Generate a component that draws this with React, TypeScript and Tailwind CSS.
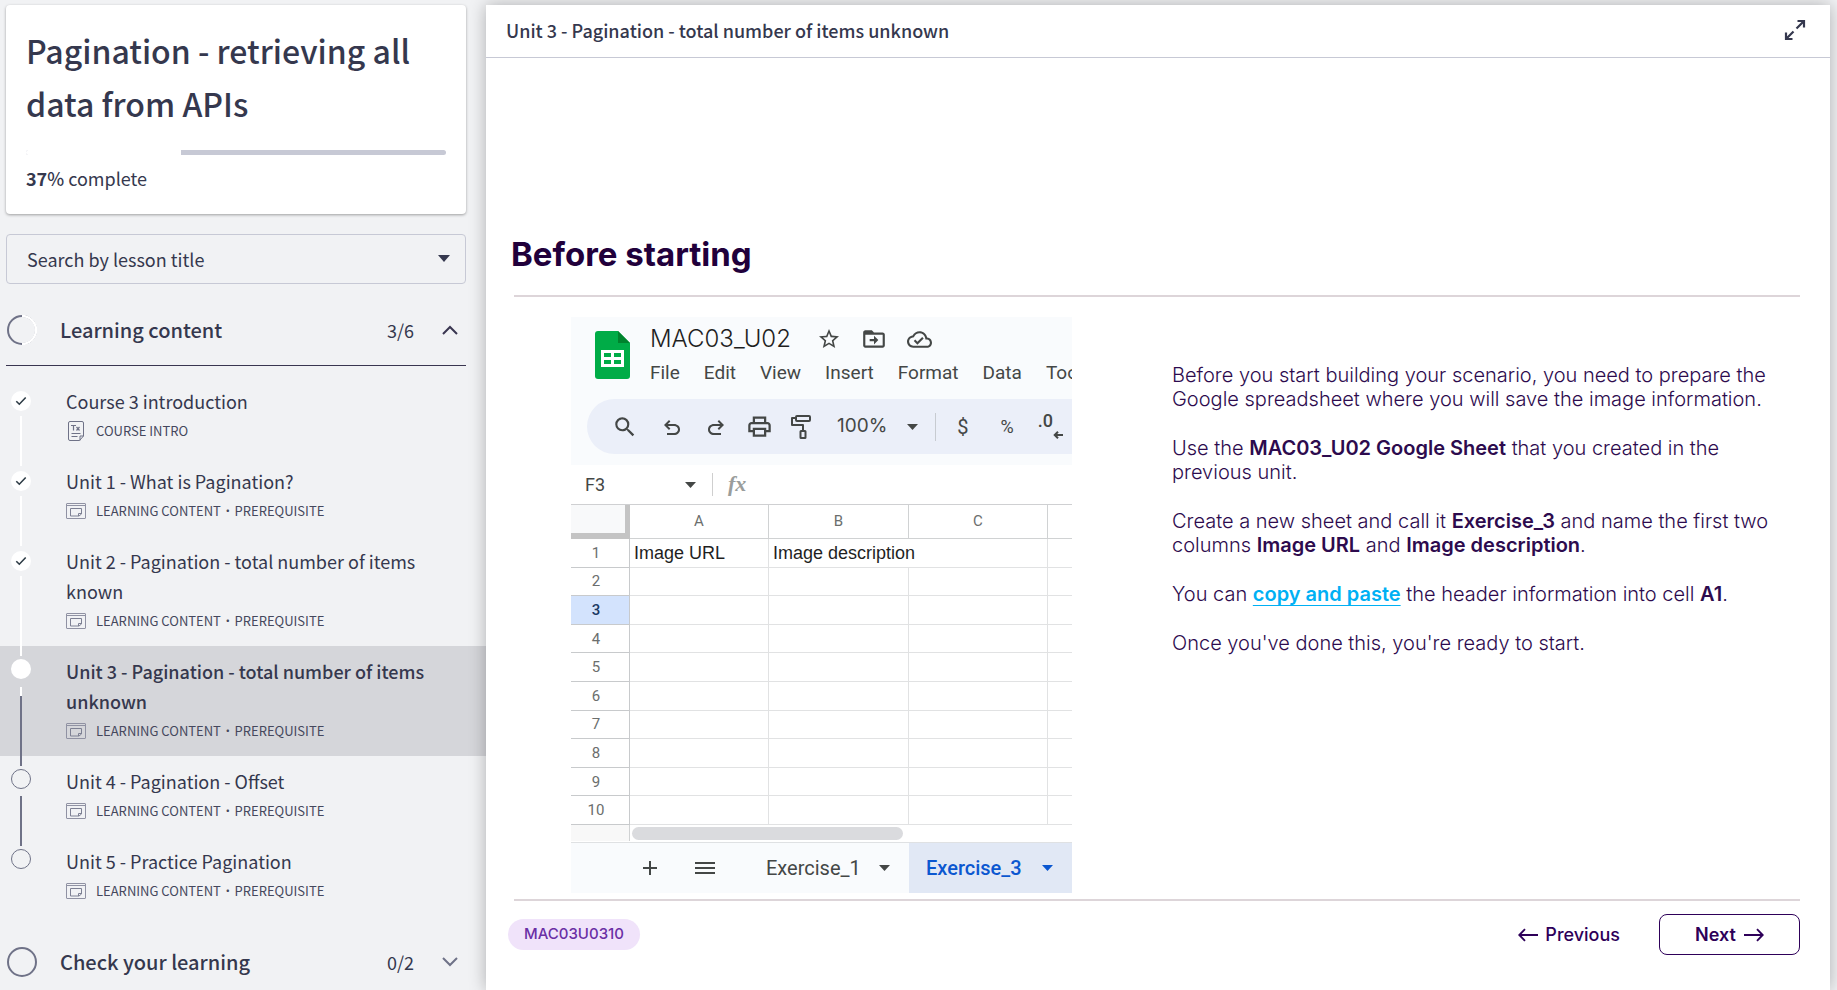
import type { ReactNode } from "react";

type LessonState = "done" | "current" | "todo";

interface Lesson {
  title: string;
  meta: string[];
  icon: "text" | "content";
  state: LessonState;
}

const lessons: Lesson[] = [
  { title: "Course 3 introduction", meta: ["COURSE INTRO"], icon: "text", state: "done" },
  { title: "Unit 1 - What is Pagination?", meta: ["LEARNING CONTENT", "PREREQUISITE"], icon: "content", state: "done" },
  { title: "Unit 2 - Pagination - total number of items known", meta: ["LEARNING CONTENT", "PREREQUISITE"], icon: "content", state: "done" },
  { title: "Unit 3 - Pagination - total number of items unknown", meta: ["LEARNING CONTENT", "PREREQUISITE"], icon: "content", state: "current" },
  { title: "Unit 4 - Pagination - Offset", meta: ["LEARNING CONTENT", "PREREQUISITE"], icon: "content", state: "todo" },
  { title: "Unit 5 - Practice Pagination", meta: ["LEARNING CONTENT", "PREREQUISITE"], icon: "content", state: "todo" },
];

function TextIcon() {
  return (
    <svg width="20" height="20" viewBox="0 0 20 20" fill="none" stroke="#6f7287" strokeWidth="1" aria-hidden="true">
      <path d="M4 .5h12a1.500 1.500 0 0 1 1.500 1.500v13l-4 4.500H4A1.500 1.500 0 0 1 2.500 18V2A1.500 1.500 0 0 1 4 .5z" />
      <path d="M17.500 15h-3.500v4.500M5.500 12.500h9M5.500 15.500h6" />
      <path d="M5 4.500h5M7.500 4.500v5M10.500 6l3 3.500M13.500 6l-3 3.500" strokeWidth="1.200" />
    </svg>
  );
}

function ContentIcon() {
  return (
    <svg width="20" height="16" viewBox="0 0 20 16" fill="none" stroke="#9092a3" strokeWidth="1" aria-hidden="true">
      <rect x=".5" y=".5" width="19" height="15" rx=".5" />
      <path d="M.5 2.500h19" />
      <path d="M4.500 5.500h11v5.500l-2.500 2H4.500z" stroke="#7d8093" />
      <path d="M15.500 10.500h-3v2.500" stroke="#7d8093" />
    </svg>
  );
}

function Marker({ state }: { state: LessonState }) {
  if (state === "done") {
    return (
      <span className="mt-[15px] flex size-5 shrink-0 items-center justify-center rounded-full bg-white">
        <svg width="12" height="10" viewBox="0 0 12 10" fill="none" stroke="#2d3b45" strokeWidth="1.600" aria-hidden="true">
          <path d="M1.300 5.200l3 3L10.700 1.500" />
        </svg>
      </span>
    );
  }
  if (state === "current") return <span className="mt-[13px] size-5 shrink-0 rounded-full bg-white" />;
  return <span className="mt-[13px] size-5 shrink-0 rounded-full border border-[#6f7287]" />;
}

function Connector({ state }: { state: LessonState }) {
  if (state === "done") return <span className="mt-[5px] -mb-[10px] w-0.5 grow bg-white" />;
  if (state === "current")
    return (
      <span className="mt-2 -mb-[10px] flex w-0.5 grow flex-col">
        <span className="h-[9px] bg-white" />
        <span className="grow bg-[#6f7287]" />
      </span>
    );
  return <span className="mt-[7px] -mb-[10px] w-0.5 grow bg-[#6f7287]" />;
}

function LessonRow({ lesson, last }: { lesson: Lesson; last: boolean }) {
  const current = lesson.state === "current";
  return (
    <li className={current ? "bg-[#d5d6da]" : ""}>
      <a href="#lesson" aria-current={current ? "page" : undefined} className="flex pl-[11px]">
        <span className="relative z-[1] flex w-5 shrink-0 flex-col items-center">
          <Marker state={lesson.state} />
          {!last && <Connector state={lesson.state} />}
        </span>
        <span className="ml-[35px] block grow py-[10px] pr-10">
          <span className={current ? "block text-lg leading-[30px] font-medium" : "block text-lg leading-[30px]"}>{lesson.title}</span>
          <span className="flex h-[30px] items-center text-[13px] text-[#45485d]">
            <span className="mr-[10px] flex w-5 justify-center">{lesson.icon === "text" ? <TextIcon /> : <ContentIcon />}</span>
            {lesson.meta[0]}
            {lesson.meta[1] && <span className="mx-[5px] font-[Lato,sans-serif] font-bold">·</span>}
            {lesson.meta[1]}
          </span>
        </span>
      </a>
    </li>
  );
}

function SectionHeader({ title, count, open }: { title: string; count: string; open: boolean }) {
  return (
    <button
      type="button"
      aria-expanded={open}
      className={
        open
          ? "mx-[6px] flex h-[72px] items-center border-b border-[#3a3650] pr-2 text-left"
          : "mx-[6px] flex h-[72px] items-center pr-2 text-left"
      }
    >
      <svg width="30" height="30" viewBox="0 0 30 30" fill="none" strokeWidth="2" className="ml-px" aria-hidden="true">
        <circle cx="15" cy="15" r="14" stroke="#6f7287" />
        {open && <path d="M15 1a14 14 0 0 1 0 28" stroke="#fff" strokeWidth="2.600" />}
      </svg>
      <span className="ml-[23px] grow text-xl font-medium">{title}</span>
      <span className="text-lg">{count}</span>
      <svg width="16" height="10" viewBox="0 0 16 10" fill="none" stroke={open ? "#3a3650" : "#6f7287"} strokeWidth="2" className="ml-7" aria-hidden="true">
        <path d={open ? "M1 9l7-7 7 7" : "M1 1l7 7 7-7"} />
      </svg>
    </button>
  );
}

function Sidebar() {
  return (
    <aside className="flex w-[486px] shrink-0 flex-col overflow-hidden pt-[5px] font-['Noto_Sans_CJK_SC',sans-serif] text-[#35384e]">
      <div className="mr-5 ml-[6px] shrink-0 rounded bg-white px-5 pt-[19px] pb-[18px] shadow-[0_1px_3px_rgba(0,0,0,0.35)]">
        <h1 className="text-[32px] leading-[53px] font-medium">Pagination - retrieving all data from APIs</h1>
        <div role="progressbar" aria-valuenow={37} aria-valuemin={0} aria-valuemax={100} aria-label="Course progress" className="mt-5 flex h-[5px] overflow-hidden rounded-full bg-[#c7c9d5]">
          <span className="w-[37%] bg-white" />
        </div>
        <p className="mt-[6px] text-lg leading-[35px]">
          <span className="font-bold">37</span>
          <span className="font-medium">%</span> complete
        </p>
      </div>
      <div className="relative mt-5 mr-5 ml-[6px] h-[50px] shrink-0">
        <select aria-label="Search by lesson title" className="h-full w-full appearance-none rounded border border-[#c7c9d5] bg-transparent px-5 text-lg">
          <option>Search by lesson title</option>
        </select>
        <svg width="12" height="7" viewBox="0 0 12 7" className="pointer-events-none absolute top-[21px] right-4" fill="#35384e" aria-hidden="true">
          <path d="M0 0h12L6 7z" />
        </svg>
      </div>
      <div className="mt-[10px] mr-[14px] flex shrink-0 flex-col">
        <SectionHeader title="Learning content" count="3/6" open />
      </div>
      <ul className="my-[10px] shrink-0">
        {lessons.map((lesson, i) => (
          <LessonRow key={lesson.title} lesson={lesson} last={i === lessons.length - 1} />
        ))}
      </ul>
      <div className="mr-[14px] flex shrink-0 flex-col">
        <SectionHeader title="Check your learning" count="0/2" open={false} />
      </div>
    </aside>
  );
}

function Caret({ className = "" }: { className?: string }) {
  return (
    <svg width="11" height="6" viewBox="0 0 11 6" fill="currentColor" className={className} aria-hidden="true">
      <path d="M0 0h11L5.500 6z" />
    </svg>
  );
}

function Glyph({ d, size = 24 }: { d: string; size?: number }) {
  return (
    <svg width={size} height={size} viewBox="0 0 24 24" fill="currentColor" className="shrink-0" aria-hidden="true">
      <path d={d} />
    </svg>
  );
}

function Tool({ label, children, className = "" }: { label: string; children: ReactNode; className?: string }) {
  return (
    <button type="button" aria-label={label} className={`flex shrink-0 items-center justify-center ${className}`}>
      {children}
    </button>
  );
}

function Spreadsheet() {
  const menus = ["File", "Edit", "View", "Insert", "Format", "Data", "Tools"];
  return (
    <div className="w-[501px] shrink-0 overflow-hidden bg-white font-[Roboto,sans-serif] text-[#444746]">
      <div className="bg-[#f9fbfd] pb-[11px]">
        <div className="flex pt-[14px] pl-6">
          <svg width="35" height="48" viewBox="0 0 35 48" className="shrink-0" aria-hidden="true">
            <path d="M3 0h20l12 12v33a3 3 0 0 1-3 3H3a3 3 0 0 1-3-3V3a3 3 0 0 1 3-3z" fill="#00ac47" />
            <path d="M23 0l12 12H23z" fill="#00832d" />
            <path fillRule="evenodd" d="M6 19h23v17H6zM9 22v4h7v-4zM19 22v4h7v-4zM9 29v4h7v-4zM19 29v4h7v-4z" fill="#fff" />
          </svg>
          <div className="-mt-2 ml-5">
            <div className="flex h-8 items-center">
              <span className="font-[Inter,sans-serif] text-2xl font-light text-[#1f1f1f]">MAC03_U02</span>
              <span className="ml-[26px] flex items-center gap-5">
                <Glyph d="M22 9.240l-7.190-.62L12 2 9.190 8.630 2 9.240l5.460 4.730L5.820 21 12 17.270 18.180 21l-1.630-7.030L22 9.240zM12 15.400l-3.760 2.270 1-4.280-3.320-2.880 4.380-.38L12 6.100l1.710 4.040 4.380.38-3.320 2.880 1 4.280L12 15.400z" />
                <Glyph size={26} d="M20 6h-8l-2-2H4c-1.100 0-2 .9-2 2v12c0 1.100.9 2 2 2h16c1.100 0 2-.9 2-2V8c0-1.100-.9-2-2-2zm0 12H4V8h16v10zm-8-1l4-4-4-4v3H8v2h4v3z" />
                <Glyph size={25} d="M19.350 10.040C18.670 6.590 15.640 4 12 4 9.110 4 6.610 5.640 5.360 8.040 2.350 8.360 0 10.900 0 14c0 3.310 2.690 6 6 6h13c2.760 0 5-2.240 5-5 0-2.640-2.050-4.780-4.650-4.960zM19 18H6c-2.210 0-4-1.790-4-4 0-2.050 1.530-3.760 3.560-3.970l1.070-.11.5-.95C8.080 7.140 9.940 6 12 6c2.620 0 4.880 1.860 5.390 4.430l.3 1.500 1.530.11c1.560.1 2.780 1.410 2.780 2.960 0 1.650-1.350 3-3 3zM10 14.180l-2.090-2.090L6.500 13.500 10 17l6.010-6.010-1.410-1.410z" />
              </span>
            </div>
            <div className="flex h-9 items-center gap-6 text-[19px]">
              {menus.map((m) => (
                <button key={m} type="button">
                  {m}
                </button>
              ))}
            </div>
          </div>
        </div>
        <div className="mt-2 ml-4 flex h-[55px] items-center rounded-l-full bg-[#ebeff9] pl-[25px]">
          <Tool label="Search menus">
            <Glyph size={26} d="M15.500 14h-.79l-.28-.27A6.470 6.470 0 0 0 16 9.500 6.500 6.500 0 1 0 9.500 16c1.610 0 3.090-.59 4.230-1.570l.27.28v.79l5 4.990L20.490 19l-4.990-5zm-6 0C7.010 14 5 11.990 5 9.500S7.010 5 9.500 5 14 7.010 14 9.500 11.990 14 9.500 14z" />
          </Tool>
          <Tool label="Undo" className="ml-[22px]">
            <Glyph size={24} d="M7 20v-2h7.100c1.050 0 1.960-.33 2.730-1C17.600 16.330 18 15.500 18 14.500s-.39-1.830-1.170-2.500c-.77-.67-1.680-1-2.730-1H7.800l2.600 2.600L9 15l-5-5 5-5 1.400 1.400L7.800 9h6.300c1.620 0 3 .53 4.160 1.570C19.420 11.620 20 12.930 20 14.500s-.58 2.880-1.740 3.930C17.100 19.480 15.720 20 14.100 20H7z" />
          </Tool>
          <Tool label="Redo" className="ml-5">
            <Glyph size={24} d="M9.900 20c-1.620 0-3-.52-4.160-1.570C4.580 17.380 4 16.070 4 14.500s.58-2.880 1.740-3.930C6.900 9.530 8.280 9 9.900 9h6.300l-2.600-2.600L15 5l5 5-5 5-1.400-1.400 2.600-2.600H9.900c-1.050 0-1.960.33-2.730 1C6.400 12.670 6 13.500 6 14.500s.39 1.830 1.170 2.500c.77.67 1.680 1 2.730 1H17v2H9.900z" />
          </Tool>
          <Tool label="Print" className="ml-[18px]">
            <Glyph size={27} d="M19 8h-1V3H6v5H5c-1.660 0-3 1.340-3 3v6h4v4h12v-4h4v-6c0-1.660-1.340-3-3-3zM8 5h8v3H8V5zm8 12v2H8v-4h8v2zm2-2v-2H6v2H4v-4c0-.55.45-1 1-1h14c.55 0 1 .45 1 1v4h-2z" />
          </Tool>
          <Tool label="Paint format" className="ml-[18px]">
            <svg width="20" height="24" viewBox="0 0 20 24" fill="none" stroke="currentColor" strokeWidth="2" strokeLinejoin="round" aria-hidden="true">
              <rect x="5" y="1" width="14" height="5" rx="1" />
              <path d="M5 3H1v7h11v6" />
              <rect x="9.500" y="16" width="5" height="7" rx=".5" />
            </svg>
          </Tool>
          <Tool label="Zoom" className="ml-[26px] font-[Inter,sans-serif] text-[19px]">
            100%
            <Caret className="ml-5" />
          </Tool>
          <span className="ml-[17px] h-7 w-px bg-[#c7cbd1]" />
          <Tool label="Format as currency" className="ml-[21px] text-xl">$</Tool>
          <Tool label="Format as percent" className="ml-8 text-lg">%</Tool>
          <Tool label="Decrease decimal places" className="ml-6">
            <span className="-mt-3 text-lg font-medium">.0</span>
            <svg width="10" height="8" viewBox="0 0 10 8" fill="none" stroke="currentColor" strokeWidth="2" className="mt-4" aria-hidden="true">
              <path d="M10 4H2M5 .7L1.700 4 5 7.300" />
            </svg>
          </Tool>
        </div>
      </div>
      <div className="flex h-[39px] items-center pl-[14px] text-lg">
        <span className="w-[100px]">F3</span>
        <Caret />
        <span className="ml-4 h-[23px] w-px bg-[#cfcfcf]" />
        <i className="ml-[15px] font-['Liberation_Serif',serif] text-[22px] font-bold text-[#9a9d9c]">fx</i>
      </div>
      <table className="h-[321px] w-full table-fixed border-separate border-spacing-0 border-t border-[#cfd0d2] text-center text-[15px]">
        <colgroup>
          <col className="w-[59px]" />
          <col className="w-[139px]" />
          <col className="w-[140px]" />
          <col className="w-[139px]" />
          <col />
        </colgroup>
        <thead>
          <tr className="h-[34px]">
            <th aria-label="Select all" className="border-r-[5px] border-b-[6px] border-[#c4c4c4] bg-[#f8f9fa] p-0" />
            {["A", "B", "C", ""].map((c) => (
              <th key={c} className="border-r border-b border-[#d0d2d3] p-0 font-normal text-[#6b6e6d] last:border-r-0">{c}</th>
            ))}
          </tr>
        </thead>
        <tbody>
          {[1, 2, 3, 4, 5, 6, 7, 8, 9, 10].map((n) => (
            <tr key={n}>
              <th
                scope="row"
                className={
                  n === 3
                    ? "border-r border-b border-[#c8cacc] bg-[#d3e3fd] py-0 pr-2 pl-0 text-[15px] leading-5 font-medium text-[#1c3a63]"
                    : "border-r border-b border-[#c8cacc] py-0 pr-2 pl-0 text-[15px] leading-5 font-normal text-[#6b6e6d]"
                }
              >
                {n}
              </th>
              <td className="border-r border-b border-[#e1e2e3] p-0 pl-1 text-left font-['Liberation_Sans',sans-serif] text-lg leading-5 text-[#1f1f1f]">
                {n === 1 ? "Image URL" : ""}
              </td>
              {n === 1 ? (
                <td colSpan={2} className="border-r border-b border-[#e1e2e3] p-0 pl-1 text-left font-['Liberation_Sans',sans-serif] text-lg leading-5 text-[#1f1f1f]">
                  Image description
                </td>
              ) : (
                <>
                  <td className="border-r border-b border-[#e1e2e3] p-0" />
                  <td className="border-r border-b border-[#e1e2e3] p-0" />
                </>
              )}
              <td className="border-b border-[#e1e2e3] p-0" />
            </tr>
          ))}
        </tbody>
      </table>
      <div className="flex h-[17px]">
        <span className="h-4 w-[59px] border-r border-[#d0d2d3] bg-[#f8f8f8]" />
        <span className="mt-0.5 ml-0.5 h-[13px] w-[271px] rounded-full bg-[#dadbde]" />
      </div>
      <div className="flex h-[51px] items-center border-t border-[#dfe1e3] bg-[#f9fbfd] text-xl">
        <Tool label="Add sheet" className="ml-[71px]">
          <svg width="16" height="16" viewBox="0 0 16 16" stroke="currentColor" strokeWidth="2" aria-hidden="true">
            <path d="M8 1v14M1 8h14" />
          </svg>
        </Tool>
        <Tool label="All sheets" className="ml-[37px]">
          <svg width="20" height="14" viewBox="0 0 20 14" stroke="currentColor" strokeWidth="2" aria-hidden="true">
            <path d="M0 2h20M0 7h20M0 12h20" />
          </svg>
        </Tool>
        <button type="button" className="ml-[51px] flex items-center">
          Exercise_1
          <Caret className="ml-[18px]" />
        </button>
        <button type="button" className="ml-auto flex h-full w-[163px] items-center pl-[17px] bg-[#e1e8f5] font-medium text-[#0b57d0]">
          Exercise_3
          <Caret className="ml-5" />
        </button>
      </div>
    </div>
  );
}

function Arrow({ flip = false }: { flip?: boolean }) {
  return (
    <svg width="20" height="14" viewBox="0 0 20 14" fill="none" stroke="currentColor" strokeWidth="1.900" aria-hidden="true">
      <path d={flip ? "M20 7H1.500M7 1.200L1.300 7 7 12.800" : "M0 7h18.500M13 1.200L18.700 7 13 12.800"} />
    </svg>
  );
}

function Instructions() {
  return (
    <div className="mt-[46px] max-w-[620px] grow space-y-[25px] text-xl leading-6 font-light text-[#2d0b4e]">
      <p>Before you start building your scenario, you need to prepare the Google spreadsheet where you will save the image information.</p>
      <p>
        Use the <b className="font-semibold">MAC03_U02 Google Sheet</b> that you created in the previous unit.
      </p>
      <p>
        Create a new sheet and call it <b className="font-semibold">Exercise_3</b> and name the first two columns{" "}
        <b className="font-semibold">Image URL</b> and <b className="font-semibold">Image description</b>.
      </p>
      <p>
        You can{" "}
        <a href="#sheet" className="font-semibold text-[#00b0f4] underline decoration-1 underline-offset-4">
          copy and paste
        </a>{" "}
        the header information into cell <b className="font-semibold">A1</b>.
      </p>
      <p>Once you've done this, you're ready to start.</p>
    </div>
  );
}

export default function App() {
  return (
    <div className="flex h-screen overflow-hidden bg-[#f1f2f4]">
      <Sidebar />
      <main className="relative z-10 mt-[5px] mr-[7px] flex min-w-0 grow flex-col bg-white shadow-[0_0_16px_rgba(0,0,0,0.28)]">
        <header className="flex h-[53px] shrink-0 items-center justify-between border-b border-[#c7c9d5] pr-6 pb-[3px] pl-5 font-['Noto_Sans_CJK_SC',sans-serif] text-[#35384e]">
          <h2 className="text-lg font-medium">Unit 3 - Pagination - total number of items unknown</h2>
          <button type="button" aria-label="Full screen">
            <svg width="22" height="22" viewBox="0 0 22 22" fill="none" stroke="#35384e" strokeWidth="2.200" aria-hidden="true">
              <path d="M13.500 2H20v6.500M20 2l-7.500 7.500M2 13.500V20h6.500M2 20l7.500-7.500" />
            </svg>
          </button>
        </header>
        <section className="flex flex-col pt-[174px] pr-[30px] pl-7 font-[Inter,sans-serif]">
          <h3 className="-ml-[3px] text-[33px] leading-[44px] font-bold text-[#21003b]">Before starting</h3>
          <div className="mt-[19px] flex border-y-2 border-[#ddd5d9] pt-5 pb-[6px]">
            <div className="flex grow pl-[57px]">
              <Spreadsheet />
              <div className="w-[100px] shrink-0" />
              <Instructions />
            </div>
          </div>
          <footer className="mt-[13px] flex items-center text-[#2e0059]">
            <span className="-ml-[6px] flex h-[31px] items-center rounded-full bg-[#f0e3fa] px-4 text-[15px] font-medium text-[#6a2fa5]">MAC03U0310</span>
            <button type="button" className="ml-auto flex items-center gap-[7px] text-lg font-medium">
              <Arrow flip />
              Previous
            </button>
            <button type="button" className="ml-[39px] flex h-[41px] w-[141px] items-center justify-center gap-2 rounded-lg border border-[#2e0059] text-lg font-semibold">
              Next
              <Arrow />
            </button>
          </footer>
        </section>
      </main>
    </div>
  );
}
